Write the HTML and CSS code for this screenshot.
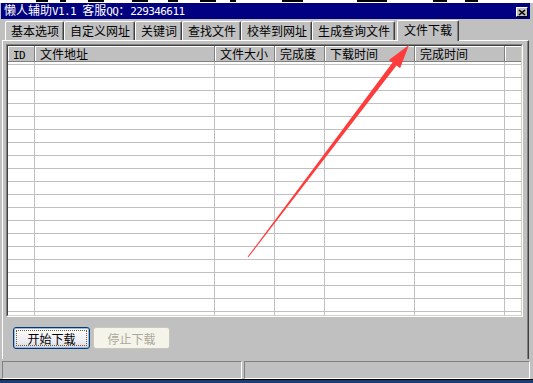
FILE: index.html
```html
<!DOCTYPE html>
<html lang="zh-CN">
<head>
  <meta charset="UTF-8">
  <title>懒人辅助V1.1</title>
  <link rel="stylesheet" href="styles.css">
</head>
<body>

  <!-- bit of the window behind -->
  <div class="top-strip">
    <span></span><span></span><span></span><span></span><span></span><span></span>
    <span></span><span></span><span></span><span></span><span></span>
  </div>

  <div class="window">
    <div class="titlebar">
      <span class="title">懒人辅助<span class="en">V1.1 </span>客服<span class="en">QQ</span>：<span class="en">229346611</span></span>
      <span class="close-btn">
        <svg width="8" height="7" viewBox="0 0 8 7"><path d="M1 1 L7 6 M7 1 L1 6" stroke="#000" stroke-width="1.6" fill="none"/></svg>
      </span>
    </div>

    <div class="tabs">
      <div class="tab">基本选项</div>
      <div class="tab">自定义网址</div>
      <div class="tab">关键词</div>
      <div class="tab">查找文件</div>
      <div class="tab">校举到网址</div>
      <div class="tab">生成查询文件</div>
      <div class="tab active">文件下载</div>
    </div>

    <div class="panel">
      <div class="listview">
        <div class="lv-inner">
          <div class="lv-header">
            <div class="hcell c-id"><span class="en">ID</span></div>
            <div class="hcell c-url">文件地址</div>
            <div class="hcell c-size">文件大小</div>
            <div class="hcell c-prog">完成度</div>
            <div class="hcell c-start">下载时间</div>
            <div class="hcell c-done">完成时间</div>
            <div class="hcell c-fill"></div>
          </div>
          <div class="lv-body">
            <div class="col c-id"></div>
            <div class="col c-url"></div>
            <div class="col c-size"></div>
            <div class="col c-prog"></div>
            <div class="col c-start"></div>
            <div class="col c-done"></div>
            <div class="col c-fill"></div>
          </div>
        </div>
      </div>

      <div class="actions">
        <button class="btn btn-default">开始下载</button>
        <button class="btn" disabled>停止下载</button>
      </div>
    </div>

    <div class="statusbar">
      <div class="status-cell first"></div>
      <div class="status-cell second"></div>
    </div>
  </div>

  <div class="taskbar-edge"></div>

  <!-- red pointer drawn over the screenshot -->
  <svg class="arrow" width="533" height="383" viewBox="0 0 533 383">
    <polygon points="247.6,256.7 248.4,257.3 396.5,65.6 400.1,68.3 409,45 388.9,59.9 392.5,62.6" fill="#ff3c3c"/>
  </svg>

</body>
</html>
```

FILE: styles.css
```css
* {
  box-sizing: border-box;
}

body {
  margin: 0;
  width: 533px;
  height: 383px;
  overflow: hidden;
  position: relative;
  background: #c0c0c0;
  font-family: "Noto Sans CJK SC", sans-serif;
  font-size: 12px;
  color: #000;
}

.en {
  font-family: "DejaVu Sans Mono", monospace;
  font-size: 11px;
  letter-spacing: -0.6px;
}

/* strip of the window behind */
.top-strip {
  height: 3px;
  background: #fff;
  display: flex;
  align-items: flex-start;
}
.top-strip span {
  height: 2px;
  background: #000;
}
.top-strip span:nth-child(1) { margin-left: 36px; width: 12px; }
.top-strip span:nth-child(2) { margin-left: 12px; width: 6px; }
.top-strip span:nth-child(3) { margin-left: 22px; width: 16px; }
.top-strip span:nth-child(4) { margin-left: 28px; width: 16px; }
.top-strip span:nth-child(5) { margin-left: 20px; width: 10px; }
.top-strip span:nth-child(6) { margin-left: 22px; width: 16px; }
.top-strip span:nth-child(7) { margin-left: 14px; width: 6px; }
.top-strip span:nth-child(8) { margin-left: 46px; width: 21px; }
.top-strip span:nth-child(9) { margin-left: 54px; width: 30px; }
.top-strip span:nth-child(10) { margin-left: 46px; width: 14px; }
.top-strip span:nth-child(11) { margin-left: 18px; width: 13px; }

.window {
  padding: 0 3px 0 1px;
}

.titlebar {
  height: 16px;
  line-height: 16px;
  background: #000080;
  color: #fff;
  display: flex;
  align-items: center;
  justify-content: space-between;
  padding: 0 2px 0 3px;
}

.close-btn {
  width: 12px;
  height: 10px;
  margin-top: 2px;
  background: #c0c0c0;
  border-top: 1px solid #fff;
  border-left: 1px solid #fff;
  border-right: 1px solid #000;
  border-bottom: 1px solid #000;
  display: flex;
  align-items: center;
  justify-content: center;
}

/* tabs */
.tabs {
  display: flex;
  align-items: flex-end;
  height: 21px;
  padding-left: 4px;
}

.tab {
  height: 19px;
  line-height: 18px;
  padding: 0 4px 0 5px;
  white-space: nowrap;
  border-top: 1px solid #fff;
  border-left: 1px solid #fff;
  border-right: 1px solid #404040;
  box-shadow: inset -1px 0 #808080;
  border-radius: 2px 2px 0 0;
}

.tab.active {
  height: 21px;
  line-height: 17px;
  margin-left: 2px;
  margin-bottom: -1px;
  padding: 0 6px;
  background: #c0c0c0;
  position: relative;
  z-index: 1;
}

.panel {
  margin-left: 1px;
  width: 527px;
  height: 319px;
  padding: 3px 0 0 3px;
  border-top: 1px solid #fff;
  border-left: 1px solid #fff;
  border-right: 1px solid #404040;
  box-shadow: inset -1px 0 #808080;
}

/* list view */
.listview {
  width: 517px;
  height: 273px;
  border: 1px solid;
  border-color: #808080 #fff #fff #808080;
}

.lv-inner {
  height: 100%;
  background: #fff;
  border: 1px solid;
  border-color: #404040 #d4d0c8 #d4d0c8 #404040;
}

.lv-header {
  display: flex;
  height: 16px;
}

.hcell {
  height: 16px;
  line-height: 15px;
  padding-left: 5px;
  background: #c0c0c0;
  white-space: nowrap;
  border-right: 1px solid #808080;
  border-bottom: 1px solid #808080;
  box-shadow: inset 1px 1px #fff;
}

.lv-body {
  display: flex;
  height: 253px;
  background: linear-gradient(#c0c0c0 1px, transparent 1px) 0 2px / 100% 13px;
}

.col {
  border-right: 1px solid #c0c0c0;
}

.c-id { width: 27px; flex: none; }
.c-url { width: 180px; flex: none; }
.c-size { width: 60px; flex: none; }
.c-prog { width: 50px; flex: none; }
.c-start { width: 90px; flex: none; }
.c-done { width: 90px; flex: none; }
.c-fill { flex: 1; }
.col.c-fill { border-right: none; }
.hcell.c-fill { border-right: none; }

/* buttons */
.actions {
  display: flex;
  gap: 3px;
  margin: 10px 0 0 7px;
}

.btn {
  width: 77px;
  height: 22px;
  padding: 0;
  font-family: inherit;
  font-size: 12px;
  color: #000;
  border: 1px solid #003c74;
  border-radius: 3px;
  background: linear-gradient(#ffffff, #ebebf2 70%, #d8d6e0);
}

.btn-default {
  box-shadow: inset 0 0 0 1px #9ab6e6;
  outline: 1px dotted #7a5a20;
  outline-offset: -4px;
}

.btn:disabled {
  color: #aca899;
  border-color: #c9c7ba;
  background: #f5f4ea;
}

/* status bar */
.statusbar {
  display: flex;
  gap: 2px;
  height: 18px;
  margin: 2px 0 0 1px;
}

.status-cell {
  border: 1px solid;
  border-color: #808080 #fff #fff #808080;
}
.status-cell.first { width: 240px; }
.status-cell.second { flex: 1; }

.taskbar-edge {
  height: 4px;
  border-top: 1px solid #000;
  background: #1c3d70;
}

.arrow {
  position: absolute;
  top: 0;
  left: 0;
  pointer-events: none;
}
```
